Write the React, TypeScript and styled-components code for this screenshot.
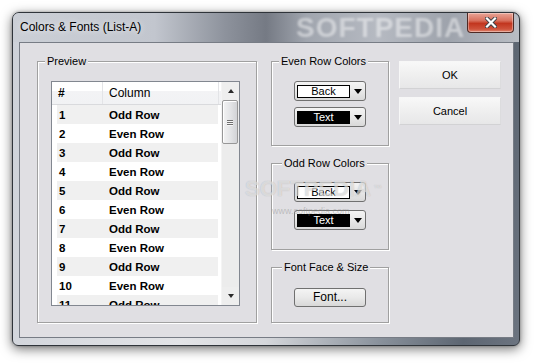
import styled, { createGlobalStyle } from "styled-components";

const rows = [
    "Odd Row",
    "Even Row",
    "Odd Row",
    "Even Row",
    "Odd Row",
    "Even Row",
    "Odd Row",
    "Even Row",
    "Odd Row",
    "Even Row",
    "Odd Row",
];

const App = () => {
    return (
        <Stage>
            <GlobalStyle />
            <Window>
                <TitleBar>
                    <TitleText>Colors &amp; Fonts (List-A)</TitleText>
                    <CloseButton>
                        <svg width="12" height="11" viewBox="0 0 12 11">
                            <path d="M2 1.5 L10 9.5 M10 1.5 L2 9.5" stroke="#3b3f45" strokeWidth="4" strokeLinecap="square" />
                            <path d="M2 1.5 L10 9.5 M10 1.5 L2 9.5" stroke="#fff" strokeWidth="2.2" strokeLinecap="square" />
                        </svg>
                    </CloseButton>
                </TitleBar>
                <Frame>
                    <Client>
                        <GroupBox $w={220} $h={262} $top={19}>
                            <GroupLabel>Preview</GroupLabel>
                            <ListBox>
                                <ListMain>
                                    <ListHeader>
                                        <HeaderCell $w={51} $bold>#</HeaderCell>
                                        <HeaderCell $w={116}>Column</HeaderCell>
                                    </ListHeader>
                                    <RowList>
                                        {rows.map((name, i) => (
                                            <Row key={i} $odd={i % 2 === 0}>
                                                <NumCell>{i + 1}</NumCell>
                                                <span>{name}</span>
                                            </Row>
                                        ))}
                                    </RowList>
                                </ListMain>
                                <ScrollBar>
                                    <ScrollButton>
                                        <ArrowUp />
                                    </ScrollButton>
                                    <Thumb>
                                        <Grip />
                                        <Grip />
                                        <Grip />
                                    </Thumb>
                                    <TrackRest />
                                    <ScrollButton>
                                        <ArrowDown />
                                    </ScrollButton>
                                </ScrollBar>
                            </ListBox>
                        </GroupBox>

                        <RightColumn>
                            <GroupBox $w={118} $h={85} $top={19} $center>
                                <GroupLabel>Even Row Colors</GroupLabel>
                                <ComboStack $gap={6}>
                                    <ColorCombo>
                                        <Swatch $bg="#fff" $fg="#000">Back</Swatch>
                                        <ComboArrow />
                                    </ColorCombo>
                                    <ColorCombo>
                                        <Swatch $bg="#000" $fg="#fff">Text</Swatch>
                                        <ComboArrow />
                                    </ColorCombo>
                                </ComboStack>
                            </GroupBox>
                            <GroupBox $w={118} $h={87} $top={18} $center>
                                <GroupLabel $left={10}>Odd Row Colors</GroupLabel>
                                <ComboStack $gap={8}>
                                    <ColorCombo>
                                        <Swatch $bg="#fff" $fg="#000">Back</Swatch>
                                        <ComboArrow />
                                    </ColorCombo>
                                    <ColorCombo>
                                        <Swatch $bg="#000" $fg="#fff">Text</Swatch>
                                        <ComboArrow />
                                    </ColorCombo>
                                </ComboStack>
                            </GroupBox>
                            <GroupBox $w={118} $h={56} $top={20} $center>
                                <GroupLabel $left={10}>Font Face &amp; Size</GroupLabel>
                                <FontButton>Font...</FontButton>
                            </GroupBox>
                        </RightColumn>

                        <ButtonColumn>
                            <DialogButton>OK</DialogButton>
                            <DialogButton>Cancel</DialogButton>
                        </ButtonColumn>
                    </Client>
                </Frame>
                <TitleMark>SOFTPEDIA</TitleMark>
                <CenterMark>
                    SOFTPEDIA<sup>™</sup>
                </CenterMark>
                <UrlMark>www.softpedia.com</UrlMark>
            </Window>
        </Stage>
    );
};

const GlobalStyle = createGlobalStyle`
    html, body {
        margin: 0;
        padding: 0;
        background: #ffffff;
    }
    body {
        font-family: "Liberation Sans", Arial, sans-serif;
        color: #000;
    }
`;

const Stage = styled.div`
    width: 540px;
    height: 364px;
    box-sizing: border-box;
    padding: 12px 0 0 12px;
    overflow: hidden;
`;

const Window = styled.div`
    position: relative;
    width: 508px;
    height: 334px;
    box-sizing: border-box;
    border: 1px solid #2f343a;
    border-radius: 7px 7px 6px 6px;
    background: linear-gradient(
        100deg,
        #cdd1d8 0%,
        #e3e4e7 40%,
        #d5d7db 55%,
        #8a929c 75%,
        #5d6672 90%,
        #6c7480 100%
    );
    box-shadow: 0 3px 12px rgba(0, 0, 0, 0.55), 0 0 3px rgba(0, 0, 0, 0.3);
    display: flex;
    flex-direction: column;
    overflow: hidden;
`;

const TitleBar = styled.div`
    height: 29px;
    flex-shrink: 0;
    display: flex;
    align-items: flex-start;
    border-radius: 6px 6px 0 0;
    background: linear-gradient(
        90deg,
        #cbcfd6 0%,
        #c2c6ce 28%,
        #8d929c 42%,
        #757a84 50%,
        #a0a5ae 58%,
        #b6bac2 72%,
        #9ea3ac 86%,
        #b9bdc4 100%
    );
`;

const TitleText = styled.div`
    padding-left: 7px;
    line-height: 29px;
    font-size: 12px;
    color: #000;
    text-shadow: 0 0 6px rgba(255, 255, 255, 0.9);
`;

const CloseButton = styled.div`
    margin-left: auto;
    margin-right: 5px;
    width: 47px;
    height: 20px;
    box-sizing: border-box;
    border: 1px solid #4e2a25;
    border-top: none;
    border-radius: 0 0 4px 4px;
    background: linear-gradient(
        180deg,
        #e9a597 0%,
        #d8705d 40%,
        #c2361f 55%,
        #cf533c 85%,
        #e08a74 100%
    );
    box-shadow: inset 0 0 0 1px rgba(255, 255, 255, 0.35);
    display: flex;
    align-items: center;
    justify-content: center;
`;

const Frame = styled.div`
    flex: 1;
    display: flex;
    padding: 0 5px 7px 6px;
`;

const Client = styled.div`
    flex: 1;
    display: flex;
    align-items: flex-start;
    box-sizing: border-box;
    border: 1px solid #777c85;
    background: #e0dfe3;
    padding: 18px 0 0 17px;
`;

const GroupBox = styled.div<{ $w: number; $h: number; $top: number; $center?: boolean }>`
    position: relative;
    box-sizing: border-box;
    width: ${({ $w }) => $w}px;
    height: ${({ $h }) => $h}px;
    border: 1px solid #a0a0a0;
    box-shadow: inset 1px 1px 0 #ffffff, 1px 1px 0 #ffffff;
    padding-top: ${({ $top }) => $top}px;
    display: flex;
    flex-direction: column;
    align-items: ${({ $center }) => ($center ? "center" : "flex-start")};
`;

const GroupLabel = styled.div<{ $left?: number }>`
    position: absolute;
    top: -7px;
    left: ${({ $left }) => $left ?? 7}px;
    padding: 0 2px;
    background: #e0dfe3;
    font-size: 11px;
    line-height: 13px;
    color: #000;
`;

const ListBox = styled.div`
    margin-left: 13px;
    width: 189px;
    height: 225px;
    box-sizing: border-box;
    border: 1px solid #828790;
    background: #ffffff;
    display: flex;
    overflow: hidden;
`;

const ListMain = styled.div`
    width: 169px;
    display: flex;
    flex-direction: column;
    overflow: hidden;
`;

const ListHeader = styled.div`
    height: 23px;
    flex-shrink: 0;
    box-sizing: border-box;
    border-bottom: 1px solid #d9dadd;
    background: linear-gradient(180deg, #ffffff 0%, #ffffff 40%, #f3f3f5 41%, #f1f2f4 100%);
    display: flex;
`;

const HeaderCell = styled.div<{ $w: number; $bold?: boolean }>`
    width: ${({ $w }) => $w}px;
    box-sizing: border-box;
    padding-left: 6px;
    border-right: 1px solid #e3e4e7;
    font-size: 12px;
    font-weight: ${({ $bold }) => ($bold ? 700 : 400)};
    line-height: 22px;
`;

const RowList = styled.div`
    margin-left: 5px;
    width: 161px;
`;

const Row = styled.div<{ $odd: boolean }>`
    height: 19px;
    display: flex;
    align-items: center;
    background: ${({ $odd }) => ($odd ? "#f0f0f0" : "#ffffff")};
    font-size: 11.5px;
    font-weight: 700;
`;

const NumCell = styled.span`
    width: 52px;
    box-sizing: border-box;
    padding-left: 2px;
`;

const ScrollBar = styled.div`
    width: 18px;
    display: flex;
    flex-direction: column;
    background: #ececec;
    border-left: 1px solid #f4f4f4;
    box-sizing: border-box;
`;

const ScrollButton = styled.div`
    height: 18px;
    flex-shrink: 0;
    display: flex;
    align-items: center;
    justify-content: center;
    background: #eeeeee;
`;

const ArrowUp = styled.div`
    width: 0;
    height: 0;
    border-left: 3.5px solid transparent;
    border-right: 3.5px solid transparent;
    border-bottom: 4px solid #2a2a2a;
`;

const ArrowDown = styled.div`
    width: 0;
    height: 0;
    border-left: 3.5px solid transparent;
    border-right: 3.5px solid transparent;
    border-top: 4px solid #2a2a2a;
`;

const Thumb = styled.div`
    height: 44px;
    margin: 0 1px 0 0;
    box-sizing: border-box;
    border: 1px solid #979797;
    border-radius: 2px;
    background: linear-gradient(90deg, #f3f3f3 0%, #e4e5e7 50%, #d2d3d6 100%);
    box-shadow: inset 1px 1px 0 #ffffff;
    display: flex;
    flex-direction: column;
    align-items: center;
    justify-content: center;
    gap: 1px;
`;

const Grip = styled.div`
    width: 6px;
    height: 1px;
    background: #6f6f6f;
    box-shadow: 0 1px 0 #f6f6f6;
`;

const TrackRest = styled.div`
    flex: 1;
`;

const RightColumn = styled.div`
    margin-left: 14px;
    display: flex;
    flex-direction: column;
    gap: 17px;
`;

const ComboStack = styled.div<{ $gap: number }>`
    display: flex;
    flex-direction: column;
    gap: ${({ $gap }) => $gap}px;
`;

const ColorCombo = styled.div`
    width: 72px;
    height: 20px;
    box-sizing: border-box;
    border: 1px solid #707070;
    border-radius: 3px;
    background: linear-gradient(180deg, #f4f4f4 0%, #e8e8e8 50%, #d9d9d9 100%);
    display: flex;
    align-items: center;
    padding: 0 3px 0 2px;
`;

const Swatch = styled.div<{ $bg: string; $fg: string }>`
    width: 53px;
    height: 13px;
    box-sizing: border-box;
    border: 1px solid #000;
    background: ${({ $bg }) => $bg};
    color: ${({ $fg }) => $fg};
    font-size: 11px;
    line-height: 11px;
    text-align: center;
`;

const ComboArrow = styled.div`
    margin-left: 4px;
    width: 0;
    height: 0;
    border-left: 4.5px solid transparent;
    border-right: 4.5px solid transparent;
    border-top: 5px solid #000;
`;

const FontButton = styled.div`
    width: 72px;
    height: 19px;
    box-sizing: border-box;
    border: 1px solid #707070;
    border-radius: 3px;
    background: linear-gradient(180deg, #f4f4f4 0%, #e9e9e9 50%, #d8d8d8 100%);
    font-size: 12px;
    line-height: 17px;
    text-align: center;
`;

const ButtonColumn = styled.div`
    margin-left: 10px;
    display: flex;
    flex-direction: column;
    gap: 8px;
`;

const DialogButton = styled.div`
    width: 102px;
    height: 28px;
    box-sizing: border-box;
    border: 1px solid #f7f7f7;
    border-bottom-color: #d2d2d4;
    border-right-color: #dcdcde;
    background: linear-gradient(180deg, #f8f8f8 0%, #efefef 50%, #e7e7e8 100%);
    font-size: 11px;
    line-height: 26px;
    text-align: center;
`;

const TitleMark = styled.div`
    position: absolute;
    top: -1px;
    left: 283px;
    font-size: 28px;
    font-weight: 700;
    letter-spacing: 1px;
    color: rgba(255, 255, 255, 0.45);
    filter: blur(0.8px);
    pointer-events: none;
`;

const CenterMark = styled.div`
    position: absolute;
    top: 165px;
    left: 232px;
    font-size: 22px;
    line-height: 22px;
    font-weight: 700;
    color: rgba(255, 255, 255, 0.55);
    text-shadow: 0 0 1px rgba(110, 110, 110, 0.45);
    pointer-events: none;

    sup {
        font-size: 8px;
        vertical-align: top;
        margin-left: 3px;
    }
`;

const UrlMark = styled.div`
    position: absolute;
    top: 193px;
    left: 259px;
    font-size: 9px;
    color: rgba(140, 140, 140, 0.45);
    pointer-events: none;
`;

export default App;
